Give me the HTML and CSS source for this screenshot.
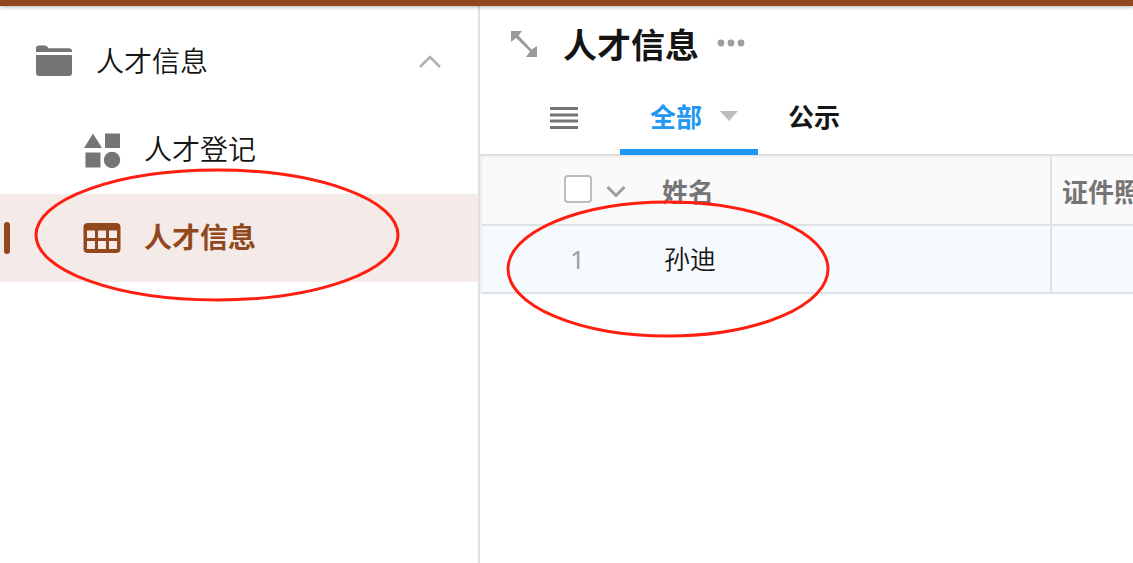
FILE: index.html
```html
<!DOCTYPE html>
<html lang="zh-CN">
<head>
<meta charset="utf-8">
<title>人才信息</title>
<link rel="stylesheet" href="styles.css">
</head>
<body>
<div class="app">
  <header class="topbar"></header>
  <div class="body">
    <nav class="sidebar">
      <button class="nav-item nav-group" type="button" aria-expanded="true">
        <svg class="nav-icon" viewBox="0 0 36 36" aria-hidden="true"><path d="M0 8V4Q0 1.500 3 1.500H9Q11 1.500 12.500 4.300H33Q36 4.300 36 7V8ZM0 11H36V29Q36 32 33 32H3Q0 32 0 29Z" fill="#757575"/></svg>
        <span class="nav-label">人才信息</span>
        <svg class="chevron" viewBox="0 0 22 14" aria-hidden="true"><path d="M1 12 11 2 21 12" fill="none" stroke="#b0b0b0" stroke-width="2.6"/></svg>
      </button>
      <a class="nav-item nav-child" href="#register">
        <svg class="nav-icon" viewBox="0 0 36 36" aria-hidden="true"><path d="M9 1.500 18 16H0ZM21 1.500H36V16H21ZM1.500 20.500H16.500V35.500H1.500Z" fill="#757575"/><circle cx="28" cy="28" r="8.200" fill="#757575"/></svg>
        <span class="nav-label">人才登记</span>
      </a>
      <a class="nav-item nav-child active" href="#info" aria-current="page">
        <svg class="nav-icon" viewBox="0 0 36 36" aria-hidden="true"><path fill-rule="evenodd" d="M4 3H32Q36.500 3 36.500 7V29Q36.500 33 32 33H4Q-.5 33-.5 29V7Q-.5 3 4 3ZM3 10.500V18H11V10.500ZM14 10.500V18H22V10.500ZM25 10.500V18H33V10.500ZM3 21V29H11V21ZM14 21V29H22V21ZM25 21V29H33V21Z" fill="#91481c"/></svg>
        <span class="nav-label">人才信息</span>
      </a>
    </nav>
    <main class="main">
      <div class="title-row">
        <button class="icon-button" type="button" aria-label="展开">
          <svg width="26" height="26" viewBox="0 0 26 26"><path d="M0 0H11L7.500 4.500 20.500 18.500 26 15V26H15L19 20.500 5 7 0 11Z" fill="#9b9b9b"/></svg>
        </button>
        <h1 class="title">人才信息</h1>
        <button class="icon-button more" type="button" aria-label="更多">
          <svg width="28" height="8" viewBox="0 0 28 8"><g fill="#9e9e9e"><circle cx="4" cy="4" r="3.400"/><circle cx="14" cy="4" r="3.400"/><circle cx="24" cy="4" r="3.400"/></g></svg>
        </button>
      </div>
      <div class="tabs">
        <button class="icon-button" type="button" aria-label="视图列表">
          <svg width="28" height="24" viewBox="0 0 28 24"><path d="M0 2.500H28M0 9H28M0 15H28M0 21.500H28" stroke="#757575" stroke-width="3"/></svg>
        </button>
        <button class="tab tab-active" type="button">全部
          <svg width="18" height="10" viewBox="0 0 18 10" aria-hidden="true"><path d="M0 0H18L9 10Z" fill="#bdbdbd"/></svg>
        </button>
        <button class="tab" type="button">公示</button>
      </div>
      <table class="grid">
        <colgroup><col class="col-select"><col class="col-name"><col></colgroup>
        <thead>
          <tr>
            <th scope="col">
              <div class="select-cell">
                <input class="check" type="checkbox" aria-label="全选">
                <svg width="20" height="13" viewBox="0 0 20 13" aria-hidden="true"><path d="M1.500 2 10 10.500 18.500 2" fill="none" stroke="#9e9e9e" stroke-width="3"/></svg>
              </div>
            </th>
            <th scope="col" class="name">姓名</th>
            <th scope="col">证件照</th>
          </tr>
        </thead>
        <tbody>
          <tr>
            <td class="index">1</td>
            <td class="name">孙迪</td>
            <td></td>
          </tr>
        </tbody>
      </table>
    </main>
  </div>
  <svg class="mark mark-nav" viewBox="0 0 366 134" aria-hidden="true"><ellipse cx="183" cy="67" rx="181" ry="65"/></svg>
  <svg class="mark mark-row" viewBox="0 0 324 138" aria-hidden="true"><ellipse cx="162" cy="69" rx="160" ry="67"/></svg>
</div>
</body>
</html>
```
FILE: styles.css
```css
* { box-sizing: border-box; }

body {
  margin: 0;
  background: #fff;
  color: #151515;
  font-family: "Noto Sans CJK SC", sans-serif;
}

button {
  border: 0;
  padding: 0;
  background: none;
  color: inherit;
  font: inherit;
}

svg { display: block; flex: none; overflow: visible; }

.app {
  position: relative;
  display: flex;
  flex-direction: column;
  min-height: 100vh;
  overflow: hidden;
}

.topbar {
  height: 6px;
  background: #91481c;
  box-shadow: 0 1px 4px rgba(0, 0, 0, 0.3);
  z-index: 1;
}

.body { display: flex; flex: 1; }

.sidebar {
  flex: none;
  width: 480px;
  padding-top: 12px;
  border-right: 2px solid #e0e0e0;
}

.nav-item {
  display: flex;
  align-items: center;
  gap: 24px;
  width: 100%;
  height: 88px;
  padding: 0 36px;
  color: #151515;
  font-size: 28px;
  font-weight: 350;
  line-height: 40px;
  text-align: left;
  text-decoration: none;
}

.nav-child { padding-left: 84px; }
.nav-icon { width: 36px; height: 36px; }
.nav-label { flex: 1; padding-bottom: 4px; }
.chevron { width: 24px; height: 14px; }

.active {
  position: relative;
  background: #f4ebe8;
  color: #91481c;
  font-weight: 700;
}

.active::before {
  content: "";
  position: absolute;
  left: 4px;
  top: 28px;
  width: 6px;
  height: 32px;
  border-radius: 3px;
  background: #91481c;
}

.main { flex: 1; min-width: 0; }

.title-row {
  display: flex;
  align-items: center;
  height: 76px;
  padding-left: 31px;
}

.title {
  margin: 0 18px 0 26px;
  font-size: 34px;
  font-weight: 700;
  line-height: 48px;
}

.more { padding-bottom: 2px; }

.tabs {
  display: flex;
  align-items: stretch;
  height: 74px;
  padding-left: 70px;
  border-bottom: 2px solid #e0e0e0;
}

.tab {
  display: flex;
  align-items: center;
  gap: 18px;
  margin-bottom: -1px;
  padding: 0 30px;
  border-bottom: 6px solid transparent;
  font-size: 26px;
  font-weight: 700;
  line-height: 40px;
}

.tab-active {
  margin-left: 42px;
  padding: 0 20px 0 30px;
  border-bottom-color: #2196f3;
  color: #2196f3;
}

.grid {
  width: 100%;
  border-collapse: separate;
  border-spacing: 0;
  border-left: 2px solid #f0f0f0;
  table-layout: fixed;
  font-size: 26px;
}

.col-select { width: 168px; }
.col-name { width: 402px; }

.grid th,
.grid td {
  height: 68px;
  padding: 0 10px;
  border-bottom: 2px solid #dfe2e5;
  overflow: hidden;
  font-weight: 350;
  line-height: 40px;
  text-align: left;
  white-space: nowrap;
}

.grid th {
  height: 70px;
  border-top: 2px solid #f2f2f2;
  background: #fafafa;
  color: #757575;
  font-weight: 700;
}

.grid td { background: #f5faff; }

.grid .name {
  padding-left: 12px;
  border-right: 2px solid #dfe2e5;
}

.grid td.name { padding: 0 10px 2px 14px; }

.grid .index {
  padding-left: 88px;
  color: #9e9e9e;
  font-family: "Noto Sans", sans-serif;
  font-weight: 400;
}

.select-cell {
  display: flex;
  align-items: center;
  gap: 14px;
  padding-left: 72px;
}

.check {
  appearance: none;
  flex: none;
  width: 28px;
  height: 28px;
  margin: 0 0 4px;
  border: 2px solid #bdbdbd;
  border-radius: 4px;
  background: #fff;
}

.mark {
  position: absolute;
  z-index: 2;
  fill: none;
  stroke: #ff1e10;
  stroke-width: 3;
  pointer-events: none;
}

.mark-nav { left: 34px; top: 168px; width: 366px; height: 134px; }
.mark-row { left: 506px; top: 200px; width: 324px; height: 138px; }
```
